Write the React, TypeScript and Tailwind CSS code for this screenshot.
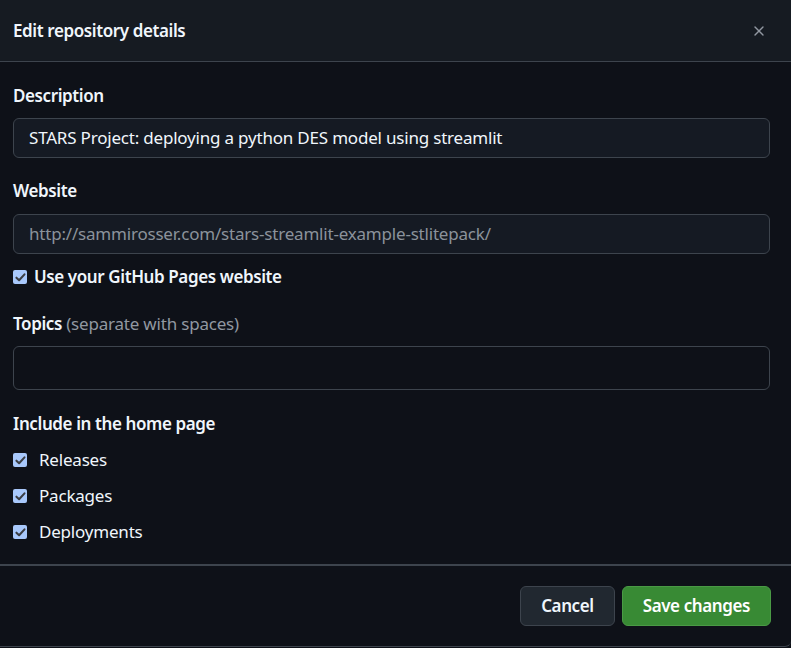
import { X } from 'lucide-react'

function Check({ label, bold = false, gap = 'gap-3' }: { label: string; bold?: boolean; gap?: string }) {
  return (
    <label className={`flex items-center ${gap} h-6`}>
      <span className="w-[14px] h-[14px] rounded-[2px] bg-[#a8c8fb] flex items-center justify-center shrink-0">
        <svg viewBox="0 0 14 14" className="w-[13px] h-[13px]">
          <path d="M2.6 7.2 L5.5 10 L11.3 3.6" fill="none" stroke="#3a3d42" strokeWidth="2.2" strokeLinecap="round" strokeLinejoin="round" />
        </svg>
      </span>
      <span className={bold ? 'font-semibold tracking-[-0.4px]' : ''}>{label}</span>
    </label>
  )
}

function App() {
  return (
    <div
      className="w-[791px] h-[648px] bg-[#0e1118] text-[#f0f6fc] text-[17px] tracking-[-0.2px] overflow-hidden"
      style={{ fontFamily: '"Noto Sans", "Open Sans", sans-serif' }}
    >
      <div className="h-[647px] flex flex-col border-b border-[#3d444d] rounded-br-[6px]">
        {/* Header */}
        <div className="h-[62px] shrink-0 bg-[#161b22] border-b border-[#3d444d] flex items-center pl-[13px] pr-[24px]">
          <h2 className="flex-1 font-semibold tracking-[-0.4px]">Edit repository details</h2>
          <X className="w-[16px] h-[16px] text-[#9198a1]" strokeWidth={2} />
        </div>

        {/* Body */}
        <div className="flex-1 flex flex-col pl-[13px] pr-[21px] pt-[22px]">
          <div className="h-6 leading-6 font-semibold tracking-[-0.4px]">Description</div>
          <div className="mt-[10px] h-[40px] rounded-[6px] border border-[#3d444d] bg-[#151a23] flex items-center px-[15px]">
            STARS Project: deploying a python DES model using streamlit
          </div>

          <div className="mt-[21px] h-6 leading-6 font-semibold tracking-[-0.4px]">Website</div>
          <div className="mt-[11px] h-[40px] rounded-[6px] border border-[#3d444d] bg-[#151a23] flex items-center px-[15px] text-[#8b929b]">
            http://sammirosser.com/stars-streamlit-example-stlitepack/
          </div>

          <div className="mt-[11px]">
            <Check label="Use your GitHub Pages website" bold gap="gap-[7px]" />
          </div>

          <div className="mt-[23px] h-6 leading-6">
            <span className="font-semibold tracking-[-0.4px]">Topics</span>{' '}
            <span className="text-[#9198a1]">(separate with spaces)</span>
          </div>
          <div className="mt-[10px] h-[44px] rounded-[6px] border border-[#3d444d] bg-[#0e1118]" />

          <div className="mt-[22px] h-6 leading-6 font-semibold tracking-[-0.4px]">Include in the home page</div>
          <div className="mt-3 flex flex-col gap-3">
            <Check label="Releases" />
            <Check label="Packages" />
            <Check label="Deployments" />
          </div>
        </div>

        {/* Footer */}
        <div className="h-[82px] shrink-0 border-t-2 border-[#3d444d] flex items-center justify-end gap-[7px] pr-[20px]">
          <button className="h-[40px] px-[20px] rounded-[6px] border border-[#3d444d] bg-[#212830] font-semibold tracking-[-0.4px]">
            Cancel
          </button>
          <button className="h-[40px] px-[20px] rounded-[6px] border border-[#4a9a45] bg-[#388a34] text-white font-semibold tracking-[-0.4px]">
            Save changes
          </button>
        </div>
      </div>
    </div>
  )
}

export default App
